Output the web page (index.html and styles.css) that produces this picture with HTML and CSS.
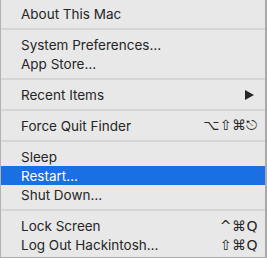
FILE: index.html
```html
<!DOCTYPE html>
<html lang="en">
<head>
    <meta charset="UTF-8">
    <title>Apple Menu</title>
    <link rel="stylesheet" href="styles.css">
</head>
<body>
    <ul class="menu">
        <li class="item"><span>About This Mac</span></li>
        <li class="sep"></li>
        <li class="item"><span>System Preferences…</span></li>
        <li class="item"><span>App Store…</span></li>
        <li class="sep"></li>
        <li class="item">
            <span>Recent Items</span>
            <svg class="arrow" width="9" height="10" viewBox="0 0 9 10"><path d="M0 0 L9 5 L0 10 Z" fill="#262626"/></svg>
        </li>
        <li class="sep"></li>
        <li class="item"><span>Force Quit Finder</span><span class="keys">⌥⇧⌘⎋</span></li>
        <li class="sep"></li>
        <li class="item"><span>Sleep</span></li>
        <li class="item active"><span>Restart…</span></li>
        <li class="item"><span>Shut Down…</span></li>
        <li class="sep"></li>
        <li class="item"><span>Lock Screen</span><span class="keys">^⌘Q</span></li>
        <li class="item"><span>Log Out Hackintosh…</span><span class="keys">⇧⌘Q</span></li>
    </ul>
</body>
</html>
```

FILE: styles.css
```css
body {
    margin: 0;
    background-color: #e8e8e8;
}
.menu {
    list-style: none;
    margin: 0;
    padding: 4px 0 3px;
    height: 258px;
    box-sizing: border-box;
    background-color: #e8e8e8;
    border-left: 1px solid #b2b2b2;
    border-right: 2px solid #a9a9a9;
    border-bottom: 1px solid #a9a9a9;
    font-family: Inter, "Noto Sans", sans-serif;
    font-size: 13.5px;
    color: #262626;
}
.item {
    display: flex;
    align-items: center;
    justify-content: space-between;
    height: 19px;
    padding: 0 7px 0 20px;
}
.item.active {
    background-color: #1a6fe3;
    color: white;
}
.keys {
    font-family: "DejaVu Sans", sans-serif;
    font-size: 14px;
    letter-spacing: 0.5px;
}
.arrow {
    margin-right: 4px;
}
.sep {
    height: 2px;
    margin: 5px 0;
    background-color: #d6d6d6;
}
```
